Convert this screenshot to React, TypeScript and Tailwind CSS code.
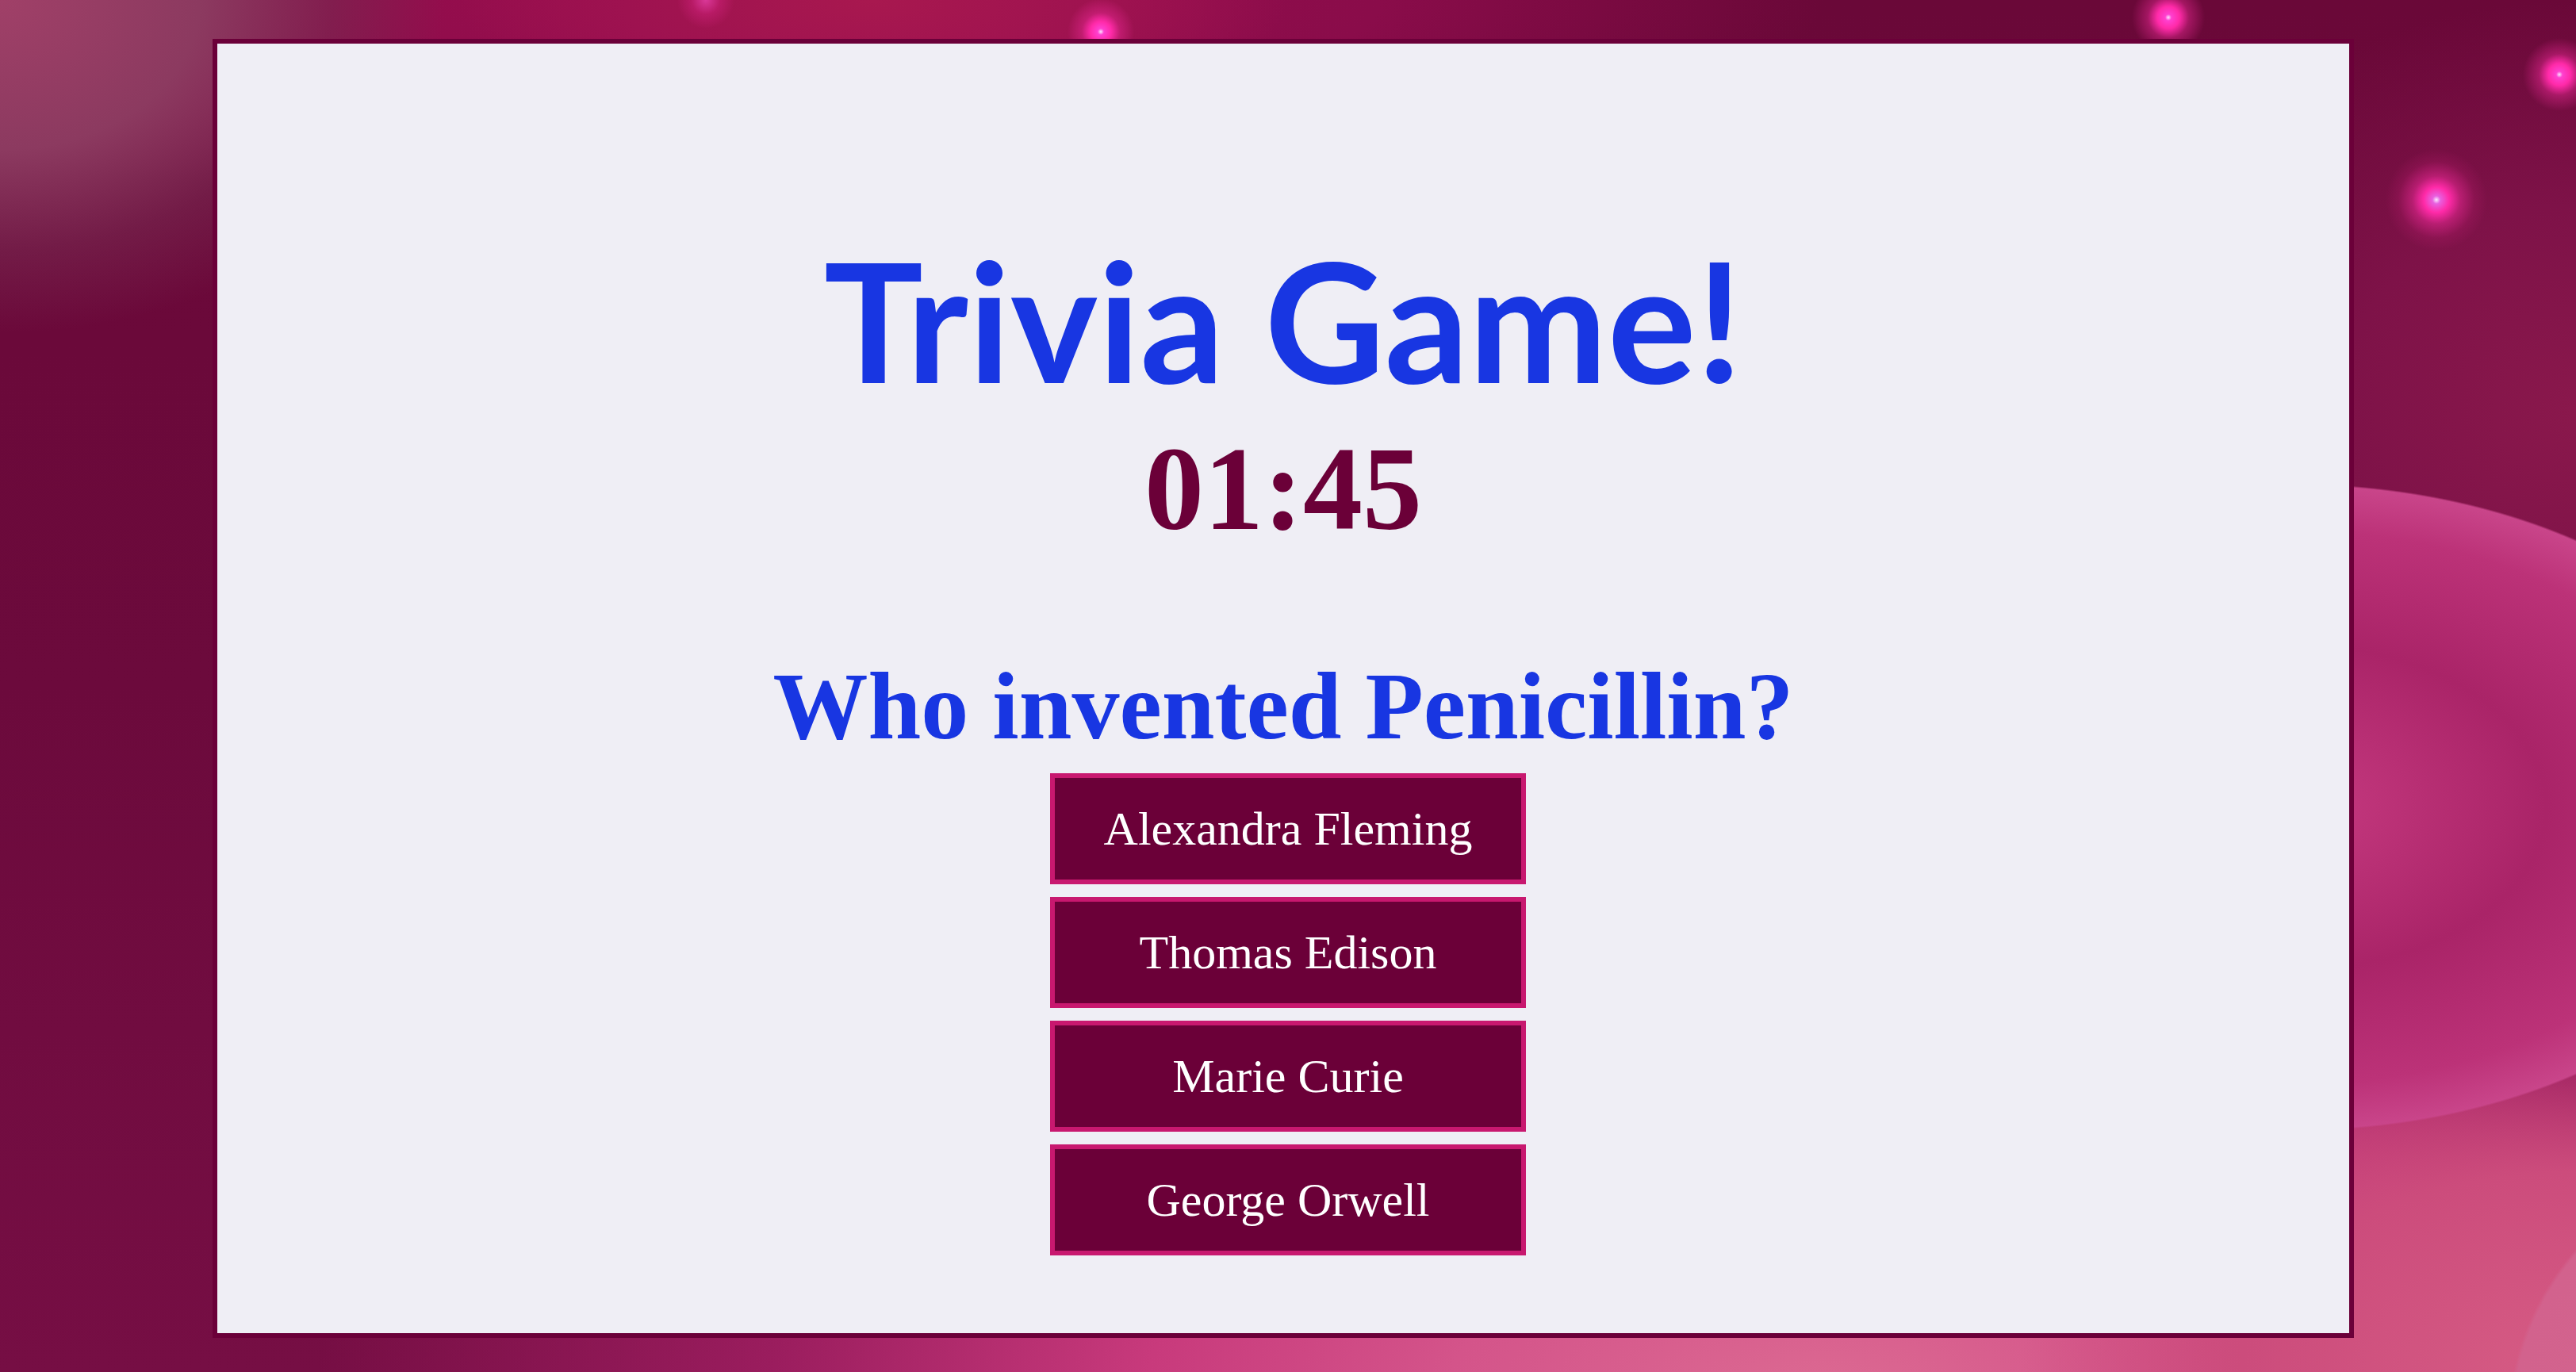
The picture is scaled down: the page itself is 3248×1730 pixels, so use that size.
const answers = ["Alexandra Fleming", "Thomas Edison", "Marie Curie", "George Orwell"];

export default function App() {
  return (
    <div className="w-full h-[1730px] overflow-hidden pt-[49px] pl-[268px] bg-[#6c0a3c] bg-[radial-gradient(circle_at_3072px_252px,#fbe8ff_0,#e860e0_5px,#ff2aa8_16px,rgba(235,40,150,0.55)_30px,rgba(200,30,120,0.2)_48px,transparent_64px),radial-gradient(circle_at_3227px_94px,#fbe8ff_0,#ff40d0_4px,#ff2aa8_14px,rgba(235,40,150,0.45)_26px,transparent_46px),radial-gradient(circle_at_2734px_22px,#fbe8ff_0,#ff40d0_4px,#ff2aa8_14px,rgba(235,40,150,0.45)_26px,transparent_46px),radial-gradient(circle_at_1388px_40px,#fbe8ff_0,#ff40d0_4px,#ff2aa8_13px,rgba(235,40,150,0.45)_24px,transparent_42px),radial-gradient(circle_at_890px_0px,rgba(255,80,200,0.6)_0,rgba(235,40,150,0.3)_18px,transparent_36px),radial-gradient(ellipse_640px_410px_at_2890px_1018px,#c63a80_0%,#aa2468_50%,#bc3278_85%,#c9458a_99%,transparent_99.6%),radial-gradient(circle_340px_at_3500px_1800px,#d6668f_0%,#d2628d_98%,transparent_99.5%),radial-gradient(ellipse_700px_420px_at_3248px_1730px,#d65c84_0%,#cc4c7c_60%,transparent_100%),radial-gradient(ellipse_1900px_820px_at_2300px_1760px,#dc6a92_0%,#d4548a_25%,#c83a7c_45%,rgba(170,35,105,0.7)_70%,transparent_100%),radial-gradient(ellipse_560px_420px_at_0px_0px,#a04068_0%,#8c3a60_45%,rgba(120,40,80,0.6)_75%,transparent_100%),radial-gradient(ellipse_520px_180px_at_1100px_0px,#a8184f_0%,#9e1250_60%,transparent_100%),radial-gradient(ellipse_1400px_260px_at_900px_0px,#9a0e4e_0%,#8a0c4a_60%,transparent_100%),radial-gradient(ellipse_600px_520px_at_3248px_520px,#8a184c_0%,#7e1248_50%,transparent_100%),linear-gradient(to_bottom,#6a0838_0%,#6c0a3c_50%,#760e44_100%)]">
      <div className="w-[2700px] h-[1638px] border-[6px] border-[#6b0039] bg-[#efeef5] flex flex-col items-center pt-[243px]">
        <h1 className="text-[209px] leading-none font-bold text-[#1836e2] font-['Lato',sans-serif]">
          Trivia Game!
        </h1>
        <div className="mt-[34px] text-[150px] leading-none font-bold text-[#6b0038] font-['Liberation_Serif',serif]">
          01:45
        </div>
        <h2 className="mt-[140px] text-[120px] leading-none font-bold text-[#1836e2] font-['Liberation_Serif',serif]">
          Who invented Penicillin?
        </h2>
        <div className="mt-[24px] ml-3 flex flex-col gap-4">
          {answers.map((a) => (
            <button
              key={a}
              className="w-[600px] h-[140px] border-[6px] border-[#c8186f] bg-[#6b0038] text-white text-[60px] font-['Liberation_Serif',serif] flex items-center justify-center"
            >
              {a}
            </button>
          ))}
        </div>
      </div>
    </div>
  );
}
